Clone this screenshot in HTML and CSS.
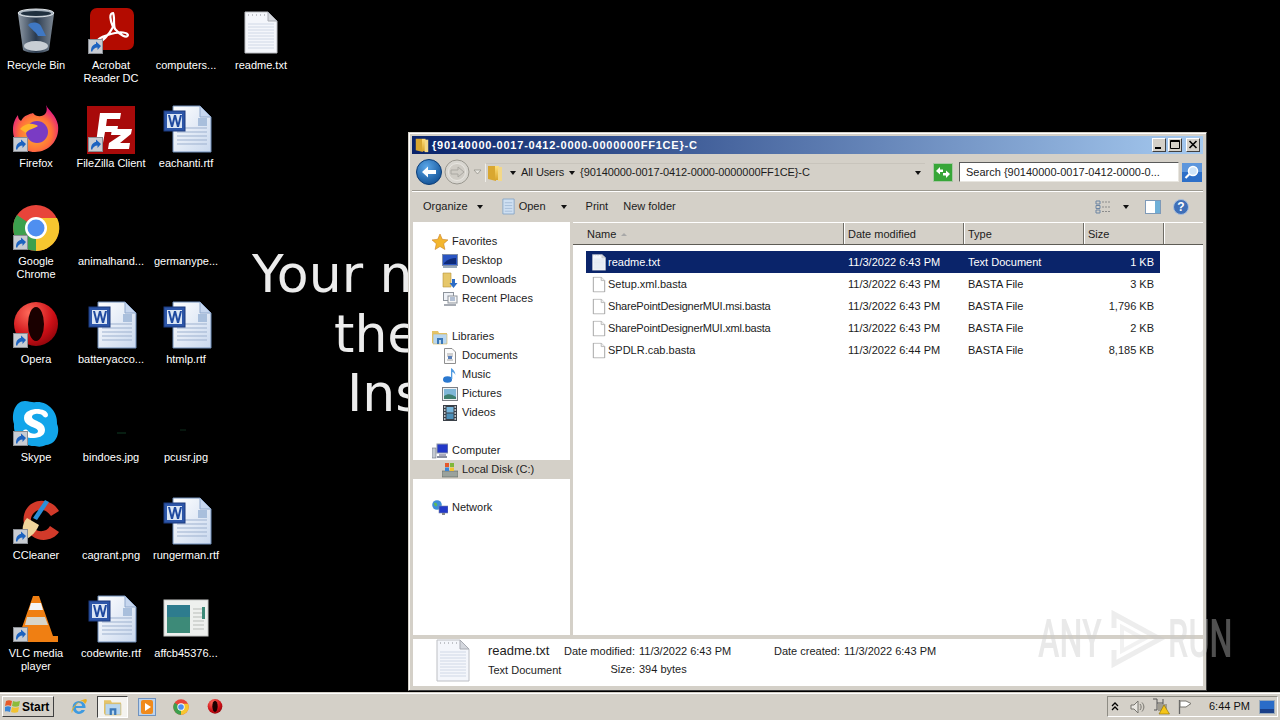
FILE: index.html
```html
<!DOCTYPE html>
<html lang="en">
<head>
<meta charset="utf-8">
<title>Desktop</title>
<link rel="stylesheet" href="styles.css">
</head>
<body>
<svg class="defs" width="0" height="0" aria-hidden="true">
  <defs>
    <linearGradient id="gDoc" x1="0" y1="0" x2="1" y2="1"><stop offset="0" stop-color="#fff"/><stop offset="1" stop-color="#c9d8ee"/></linearGradient>
    <linearGradient id="gFold" x1="0" y1="0" x2="0" y2="1"><stop offset="0" stop-color="#ffdf7a"/><stop offset="1" stop-color="#d9a52c"/></linearGradient>
    <linearGradient id="gBin" x1="0" y1="0" x2="1" y2="0"><stop offset="0" stop-color="#8f9aa6"/><stop offset=".5" stop-color="#2a3a4e"/><stop offset="1" stop-color="#7d8894"/></linearGradient>
    <radialGradient id="gBack" cx=".4" cy=".3" r=".8"><stop offset="0" stop-color="#5aa6e8"/><stop offset="1" stop-color="#0c4a8e"/></radialGradient>
    <radialGradient id="gFox" cx=".5" cy=".6" r=".6"><stop offset="0" stop-color="#ffbd2e"/><stop offset=".6" stop-color="#ff7139"/><stop offset="1" stop-color="#e31587"/></radialGradient>
    <radialGradient id="gOp" cx=".35" cy=".25" r=".9"><stop offset="0" stop-color="#ff6a5a"/><stop offset=".6" stop-color="#cc0f16"/><stop offset="1" stop-color="#7c0208"/></radialGradient>

    <symbol id="word" viewBox="0 0 48 48" overflow="visible">
      <path d="M11 0H38L49 11V46H11Z" fill="url(#gDoc)" stroke="#6f8db8"/>
      <path d="M38 0V11H49Z" fill="#c6d6ee" stroke="#8fa8cc"/>
      <path d="M15 22H45M15 26H45M15 30H45M15 34H45M15 38H45" stroke="#9db1cf"/>
      <rect x="36" y="12" width="9" height="8" fill="#a9bfdc"/>
      <rect x="2" y="5" width="21" height="20" fill="#2d56a8" stroke="#1c3a7f"/>
      <rect x="5" y="8" width="15" height="14" fill="#dbe6f5"/>
      <path d="M6 9L9 21H11L13 13L15 21H17L20 9H18L16 17L14 9H12L10 17L8 9Z" fill="#1f4aa0"/>
    </symbol>

    <symbol id="txt" viewBox="0 0 34 44">
      <path d="M1 1H24L33 10V42H1Z" fill="#f4f6fb" stroke="#bdbfc4"/>
      <path d="M24 1V10H33Z" fill="#d4d7dd" stroke="#a8abb2"/>
      <path d="M4 13H30M4 16H30M4 19H30M4 22H30M4 25H30M4 28H30M4 31H30M4 34H30M4 37H30" stroke="#d0d8e6"/>
      <path d="M4 4H5M8 4H9M12 4H13M16 4H17M20 4H21" stroke="#8d9096"/>
    </symbol>

    <symbol id="blank16" viewBox="0 0 16 18">
      <path d="M1.500 .5H10.500L14.500 4.500V17.500H1.500Z" fill="#fff" stroke="#9a9a9a"/>
      <path d="M10.500 .5V4.500H14.500" fill="#eee" stroke="#b5b5b5"/>
    </symbol>

    <symbol id="folder16" viewBox="0 0 16 18">
      <path d="M1 2H8L9 4V17L1 15Z" fill="#d9a730"/>
      <path d="M8 2H12V16H8Z" fill="url(#gFold)"/>
      <path d="M11 3H15V17H11Z" fill="#f3d888"/>
    </symbol>

    <symbol id="shortcut" viewBox="0 0 15 15">
      <rect x=".5" y=".5" width="14" height="14" fill="#c8ccd2" stroke="#8a8e94"/>
      <path d="M3 12C3 7 6 5 8 5V2.500L13 7L9.500 11V8.500C7 8.500 5 10 4 13Z" fill="#1c63c0"/>
    </symbol>

    <symbol id="star" viewBox="0 0 16 16"><path d="M8 0L10.300 5.300L16 5.900L11.700 9.700L12.900 15.500L8 12.500L3.100 15.500L4.300 9.700L0 5.900L5.700 5.300Z" fill="#f3b62e" stroke="#c9812a" stroke-width=".6"/></symbol>
    <symbol id="desk" viewBox="0 0 16 16"><rect x=".5" y="1.500" width="15" height="11" fill="#2a55c2" stroke="#7e8da8"/><path d="M2 10C6 6 10 5 14 5V11H2Z" fill="#0e2a78"/><rect x="1" y="13" width="14" height="2" fill="#9ab"/></symbol>
    <symbol id="down" viewBox="0 0 16 16"><path d="M1 1H9V15H1Z" fill="#e6c76a" stroke="#b5943c" stroke-width=".6"/><path d="M10 7H13V11H15.500L11.500 16L7.500 11H10Z" fill="#2c6cc6"/></symbol>
    <symbol id="recent" viewBox="0 0 16 16"><rect x="1.500" y="1.500" width="10" height="8" fill="#eef1f6" stroke="#8d939b"/><rect x="6" y="5" width="9" height="7" fill="#f7f7f7" stroke="#8d939b"/><path d="M8 7H13M8 9H13" stroke="#6b86b0"/><rect x="2" y="13" width="12" height="2" fill="#a6abb3"/></symbol>
    <symbol id="lib" viewBox="0 0 16 16"><path d="M0 2H6L7 4H15V14H0Z" fill="#e5c468"/><path d="M1 5H15V15H1Z" fill="#b8d6ee" stroke="#d6b659" stroke-width=".6"/><path d="M5 15V9H11V15H9V11H7V15Z" fill="#3b78b8"/></symbol>
    <symbol id="docs" viewBox="0 0 16 16"><path d="M2.500 .5H10L13.500 4V15.500H2.500Z" fill="#fbfbfb" stroke="#8f8f8f"/><path d="M5 6H11M5 8H11M5 12H11" stroke="#a3a3a3"/><rect x="6" y="8" width="4" height="3" fill="#5a7fb8"/></symbol>
    <symbol id="music" viewBox="0 0 16 16"><ellipse cx="5.500" cy="12.500" rx="4.500" ry="3.300" fill="#2a78cf"/><path d="M9 12V1C11 2 13 4 13.500 8C12.500 6 11 5 10.300 5V12Z" fill="#4f9ae0"/></symbol>
    <symbol id="pics" viewBox="0 0 16 16"><rect x=".5" y="1.500" width="15" height="13" fill="#eef1f4" stroke="#7b7f85"/><rect x="2" y="3" width="12" height="10" fill="#7fb7d8"/><path d="M2 10C6 7 10 8 14 11V13H2Z" fill="#3e7f6f"/></symbol>
    <symbol id="vid" viewBox="0 0 16 16"><rect x="1" y="0" width="14" height="16" fill="#3a4048"/><rect x="4.500" y="2" width="7" height="5.500" fill="#75b6dd"/><rect x="4.500" y="8.500" width="7" height="5.500" fill="#4c8fb8"/><path d="M2 2H3.500M2 5H3.500M2 8H3.500M2 11H3.500M2 14H3.500M12.500 2H14M12.500 5H14M12.500 8H14M12.500 11H14M12.500 14H14" stroke="#dfe6ec" stroke-width="1.400"/></symbol>
    <symbol id="comp" viewBox="0 0 16 16"><rect x="5" y="1" width="11" height="9" fill="#2238c8" stroke="#8b94a8"/><rect x="7" y="11" width="7" height="2" fill="#aab"/><rect x="0" y="5" width="4" height="10" fill="#c5cad2" stroke="#6c7280" stroke-width=".6"/><rect x="5" y="13" width="10" height="2" fill="#8a90a0"/></symbol>
    <symbol id="disk" viewBox="0 0 16 16"><rect x="0" y="9" width="16" height="6" fill="#9aa29c" stroke="#5f6660" stroke-width=".6"/><rect x="3" y="1" width="4" height="4" fill="#e5582a"/><rect x="8" y="1" width="4" height="4" fill="#7fb73a"/><rect x="3" y="5.500" width="4" height="3.500" fill="#3a86d8"/><rect x="8" y="5.500" width="4" height="3.500" fill="#f2c230"/></symbol>
    <symbol id="net" viewBox="0 0 16 16"><circle cx="5" cy="5" r="4.800" fill="#3f8fd8"/><path d="M2 3C4 2 6 4 5 6C3 7 2 5 2 3Z" fill="#5dbb5a"/><rect x="7" y="6" width="9" height="7" fill="#2238c8" stroke="#7d86a0" stroke-width=".6"/><rect x="10" y="13" width="3" height="2" fill="#888"/></symbol>
    <symbol id="ie" viewBox="0 0 18 18"><path d="M9 3A6.500 6.500 0 1 0 15 12H11.500A3 3 0 0 1 6 10H15.500C16 6 13 3 9 3ZM6 8A3 3 0 0 1 12 8Z" fill="#3e9ae0"/><path d="M2 15C0 11 8 2 16 1C18 2 16 5 15 6C14 4 13 3 11 3C7 5 3 10 2 15Z" fill="#e8b024"/></symbol>
    <symbol id="wmp" viewBox="0 0 18 18"><rect x=".5" y=".5" width="17" height="17" fill="#bcd4ee" stroke="#6f93c0"/><rect x="3" y="2" width="12" height="14" rx="2" fill="#f08a1c"/><path d="M7 5L13 9L7 13Z" fill="#fff"/></symbol>
    <symbol id="chrome" viewBox="0 0 48 48">
      <circle cx="24" cy="24" r="23" fill="#e8443a"/>
      <path d="M24 24L4 35A23 23 0 0 1 5 11Z" fill="#3ca04e"/>
      <path d="M24 24L24 47A23 23 0 0 1 4 35Z" fill="#3ca04e"/>
      <path d="M24 14H45A23 23 0 0 1 24 47Z" fill="#f7c62f"/>
      <circle cx="24" cy="24" r="11" fill="#fff"/><circle cx="24" cy="24" r="8.500" fill="#4f8ff0"/>
    </symbol>
    <symbol id="opera" viewBox="0 0 48 48">
      <circle cx="24" cy="22" r="22" fill="url(#gOp)"/>
      <ellipse cx="24" cy="22" rx="8" ry="17" fill="#1a0000"/>
    </symbol>
  </defs>
</svg>

<main class="desktop">
  <div class="wall">
    <p class="wall-line wall-a">Your n</p>
    <p class="wall-line wall-b">the</p>
    <p class="wall-line wall-c">Ins</p>
  </div>

  <section class="icons">
    <div class="ico">
      <svg class="pic" viewBox="0 0 48 48"><path d="M6 6L11 42C16 46 32 46 37 42L42 6Z" fill="url(#gBin)"/><ellipse cx="24" cy="5" rx="18" ry="4" fill="#a9b4bf" stroke="#dfe4e8"/><ellipse cx="24" cy="5.500" rx="15" ry="2.400" fill="#20303f"/><path d="M16 17C20 13 28 14 30 20L34 28L26 28C24 24 20 22 16 17Z" fill="#3f78c4"/><ellipse cx="24" cy="38" rx="12" ry="5" fill="#c8ced4"/></svg>
      <span class="lbl">Recycle Bin</span>
    </div>
    <div class="ico">
      <svg class="pic" viewBox="0 1 48 48"><path d="M34 0C37 6 44 10 46 20C48 36 36 47 23 47C10 47 1 37 1 25C1 18 3 14 6 10C6 14 8 15 9 16C12 10 18 9 21 8C25 14 38 12 34 0Z" fill="url(#gFox)"/><circle cx="25" cy="27" r="11" fill="#7a3bc4"/><path d="M8 24C14 17 22 18 26 21C22 24 16 24 14 28Z" fill="#ffb52a"/></svg>
      <svg class="scut" viewBox="0 0 15 15"><use href="#shortcut"/></svg>
      <span class="lbl">Firefox</span>
    </div>
    <div class="ico">
      <svg class="pic" viewBox="0 0 48 48"><use href="#chrome"/></svg>
      <svg class="scut" viewBox="0 0 15 15"><use href="#shortcut"/></svg>
      <span class="lbl">Google<br>Chrome</span>
    </div>
    <div class="ico">
      <svg class="pic" viewBox="0 0 48 48"><use href="#opera"/></svg>
      <svg class="scut" viewBox="0 0 15 15"><use href="#shortcut"/></svg>
      <span class="lbl">Opera</span>
    </div>
    <div class="ico">
      <svg class="pic" viewBox="0 0 48 48"><path d="M13 1C18 1 20 3 24 2C36 1 46 12 45 24C48 30 46 44 34 45C28 48 24 46 22 46C10 46 1 36 2 24C-1 14 3 1 13 1Z" fill="#12a5ea"/><path d="M33 30C33 37 25 38 20 38C16 38 11 36 11 32C11 29 15 29 16 31C18 34 26 35 26 31C26 27 12 27 12 18C12 11 20 9 25 9C30 9 36 11 36 15C36 18 32 18 31 16C29 13 20 13 20 17C20 21 33 21 33 30Z" fill="#fff"/></svg>
      <svg class="scut" viewBox="0 0 15 15"><use href="#shortcut"/></svg>
      <span class="lbl">Skype</span>
    </div>
    <div class="ico">
      <svg class="pic" viewBox="0 0 48 48"><path d="M47 13C42 4 30 0 21 5C9 11 8 30 20 38C29 45 42 42 47 34L38 28C35 34 26 35 22 30C16 24 19 14 27 12C32 11 36 14 39 18Z" fill="#d23a2a"/><path d="M33 2L37 4L25 22L21 20Z" fill="#2a8fd8"/><path d="M15 20L27 27C24 34 20 38 13 42C10 36 9 26 15 20Z" fill="#efd49a"/></svg>
      <svg class="scut" viewBox="0 0 15 15"><use href="#shortcut"/></svg>
      <span class="lbl">CCleaner</span>
    </div>
    <div class="ico">
      <svg class="pic" viewBox="0 0 48 48"><path d="M21 0H27L41 40H46V46H8V40H7Z" fill="#f07f12"/><path d="M19 7H29L31 14H17Z" fill="#f4f4f4"/><path d="M15 21H33L36 29H13Z" fill="#d8d4c8"/></svg>
      <svg class="scut" viewBox="0 0 15 15"><use href="#shortcut"/></svg>
      <span class="lbl">VLC media<br>player</span>
    </div>

    <div class="ico">
      <svg class="pic" viewBox="0 0 48 48"><rect x="3" y="0" width="44" height="42" rx="7" fill="#b30b00"/><path d="M26 5C22 5 23 12 26 19C22 27 15 34 10 35C9 30 20 27 28 25C33 24 40 24 41 27C40 31 33 27 28 21C26 16 28 9 26 5Z" fill="none" stroke="#fff" stroke-width="2.200"/></svg>
      <svg class="scut" viewBox="0 0 15 15"><use href="#shortcut"/></svg>
      <span class="lbl">Acrobat<br>Reader DC</span>
    </div>
    <div class="ico">
      <svg class="pic" viewBox="0 1 48 48"><rect x="0" y="1" width="48" height="48" fill="#a80a0a"/><path d="M13 8H34L33 14H20L19 21H31L30 27H18L16 38H9Z" fill="#fff"/><path d="M25 24H45L44 29L33 38H43L42 44H21L22 38L34 30H24Z" fill="#fff"/></svg>
      <svg class="scut" viewBox="0 0 15 15"><use href="#shortcut"/></svg>
      <span class="lbl">FileZilla Client</span>
    </div>
    <div class="ico"><span class="pic"></span><span class="lbl">animalhand...</span></div>
    <div class="ico"><svg class="pic" viewBox="0 0 48 48"><use href="#word"/></svg><span class="lbl">batteryacco...</span></div>
    <div class="ico"><svg class="pic" viewBox="0 0 48 48"><path d="M30 33H39" stroke="#0e3a22" stroke-width="1"/></svg><span class="lbl">bindoes.jpg</span></div>
    <div class="ico"><span class="pic"></span><span class="lbl">cagrant.png</span></div>
    <div class="ico"><svg class="pic" viewBox="0 0 48 48"><use href="#word"/></svg><span class="lbl">codewrite.rtf</span></div>

    <div class="ico"><span class="pic"></span><span class="lbl">computers...</span></div>
    <div class="ico"><svg class="pic" viewBox="0 0 48 48"><use href="#word"/></svg><span class="lbl">eachanti.rtf</span></div>
    <div class="ico"><span class="pic"></span><span class="lbl">germanype...</span></div>
    <div class="ico"><svg class="pic" viewBox="0 0 48 48"><use href="#word"/></svg><span class="lbl">htmlp.rtf</span></div>
    <div class="ico"><svg class="pic" viewBox="0 0 48 48"><path d="M18 30H24" stroke="#0e2c1c" stroke-width="1"/></svg><span class="lbl">pcusr.jpg</span></div>
    <div class="ico"><svg class="pic" viewBox="0 0 48 48"><use href="#word"/></svg><span class="lbl">rungerman.rtf</span></div>
    <div class="ico">
      <svg class="pic" viewBox="0 0 48 48"><rect x="2" y="4" width="44" height="36" fill="#eef0ee" stroke="#c8cac8"/><rect x="5" y="9" width="23" height="28" fill="#3d8a78"/><rect x="5" y="9" width="23" height="12" fill="#2e7c8e"/><path d="M31 13H42M31 17H42M31 21H42M31 25H42M31 29H42M31 33H42" stroke="#b9bdb9"/><rect x="40" y="11" width="3" height="12" fill="#3d8a78"/></svg>
      <span class="lbl">affcb45376...</span>
    </div>

    <div class="ico">
      <svg class="pic" viewBox="0 0 48 48"><use href="#txt" x="7" y="3" width="34" height="44"/></svg>
      <span class="lbl">readme.txt</span>
    </div>
  </section>

  <section class="win">
    <header class="title">
      <svg class="t-ico" viewBox="0 0 16 18"><use href="#folder16"/></svg>
      <h1 class="t-text">{90140000-0017-0412-0000-0000000FF1CE}-C</h1>
      <div class="t-btns">
        <span class="cap"><svg viewBox="0 0 12 12"><rect x="2" y="8" width="6" height="2" fill="#000"/></svg></span>
        <span class="cap"><svg viewBox="0 0 12 12"><path d="M1.500 1.500H10.500V9.500H1.500ZM1.500 2.500H10.500" fill="none" stroke="#000"/></svg></span>
        <span class="cap cap-x"><svg viewBox="0 0 12 12"><path d="M2.500 2L9.500 9M9.500 2L2.500 9" stroke="#000" stroke-width="1.600"/></svg></span>
      </div>
    </header>

    <div class="addr">
      <div class="nav-btns">
        <svg class="round" width="26" height="26" viewBox="0 0 26 26"><circle cx="13" cy="13" r="12.500" fill="url(#gBack)" stroke="#0b3d78"/><path d="M6 13L12 7.500V11H20V15H12V18.500Z" fill="#fff"/></svg>
        <svg class="round" width="26" height="26" viewBox="0 0 26 26"><circle cx="13" cy="13" r="12" fill="#d8d6d0" stroke="#99978f"/><circle cx="13" cy="13" r="8.500" fill="#cfccc5" stroke="#e8e6e1"/><path d="M20 13L14 8V11H7V15H14V18Z" fill="none" stroke="#aaa8a2"/></svg>
        <svg class="tiny" width="9" height="6" viewBox="0 0 9 6"><path d="M1 1L4.500 5L8 1Z" fill="#e8e6e0" stroke="#8e8c84" stroke-width=".7"/></svg>
      </div>
      <div class="path">
        <svg class="p-ico" viewBox="0 0 16 18"><use href="#folder16"/></svg>
        <span class="arrow a-first"></span>
        <span>All Users</span>
        <span class="arrow"></span>
        <span>{90140000-0017-0412-0000-0000000FF1CE}-C</span>
        <span class="arrow a-end"></span>
      </div>
      <svg class="go" width="20" height="19" viewBox="0 0 20 19"><rect x=".5" y=".5" width="19" height="18" fill="#37a638" stroke="#a8c8a4"/><path d="M3 8L7 4V6.500H10V9H7V11.500ZM17 11L13 15V12.500H10V10H13V7.500Z" fill="#fff"/></svg>
      <div class="search">Search {90140000-0017-0412-0000-0...</div>
      <svg class="s-btn" width="20" height="19" viewBox="0 0 20 19"><rect width="20" height="19" fill="#2d6fc8"/><rect width="20" height="9" fill="#5d96dc"/><circle cx="11" cy="8" r="4.500" fill="#cfe4f8" stroke="#fff" stroke-width="1.500"/><path d="M7.500 11L3.500 15" stroke="#fff" stroke-width="2.200"/></svg>
    </div>

    <div class="tools">
      <span class="tool">Organize</span><span class="arrow t-a1"></span>
      <svg class="open-ico" viewBox="0 0 16 18"><path d="M2 1H14V17H2Z" fill="#cfe0f2" stroke="#8aa8c8"/><path d="M4 5H12M4 8H12M4 11H12M4 14H12" stroke="#a4bcd8"/></svg>
      <span class="tool">Open</span><span class="arrow t-a2"></span>
      <span class="tool t-print">Print</span>
      <span class="tool t-new">New folder</span>
      <div class="t-right">
        <svg class="v-ico" width="16" height="16" viewBox="0 0 16 16"><path d="M1 2H5V5H1ZM1 6.500H5V9.500H1ZM1 11H5V14H1Z" fill="none" stroke="#6d85a3"/><path d="M7 3H15M7 8H15M7 12.500H15" stroke="#8c8c8c" stroke-dasharray="2 1"/></svg>
        <span class="arrow t-a3"></span>
        <svg class="v-pane" width="16" height="16" viewBox="0 0 16 16"><rect x=".5" y="1.500" width="15" height="13" fill="#fff" stroke="#7e9ab8"/><rect x="10" y="2" width="5" height="12" fill="#6fb0d8"/></svg>
        <svg class="v-help" width="16" height="16" viewBox="0 0 16 16"><circle cx="8" cy="8" r="7.500" fill="#3f6fb8" stroke="#a8bedc"/><text x="8" y="12" class="help-q">?</text></svg>
      </div>
    </div>

    <div class="body">
      <nav class="nav">
        <ul class="tree">
          <li class="n0 top"><svg viewBox="0 0 16 16"><use href="#star"/></svg>Favorites</li>
          <li class="n1"><svg viewBox="0 0 16 16"><use href="#desk"/></svg>Desktop</li>
          <li class="n1"><svg viewBox="0 0 16 16"><use href="#down"/></svg>Downloads</li>
          <li class="n1"><svg viewBox="0 0 16 16"><use href="#recent"/></svg>Recent Places</li>
        </ul>
        <ul class="tree">
          <li class="n0"><svg viewBox="0 0 16 16"><use href="#lib"/></svg>Libraries</li>
          <li class="n1"><svg viewBox="0 0 16 16"><use href="#docs"/></svg>Documents</li>
          <li class="n1"><svg viewBox="0 0 16 16"><use href="#music"/></svg>Music</li>
          <li class="n1"><svg viewBox="0 0 16 16"><use href="#pics"/></svg>Pictures</li>
          <li class="n1"><svg viewBox="0 0 16 16"><use href="#vid"/></svg>Videos</li>
        </ul>
        <ul class="tree">
          <li class="n0"><svg viewBox="0 0 16 16"><use href="#comp"/></svg>Computer</li>
          <li class="n1 cur"><svg viewBox="0 0 16 16"><use href="#disk"/></svg>Local Disk (C:)</li>
        </ul>
        <ul class="tree">
          <li class="n0"><svg viewBox="0 0 16 16"><use href="#net"/></svg>Network</li>
        </ul>
      </nav>

      <div class="list">
        <div class="cols">
          <span class="col c-name">Name <i class="sort"></i></span>
          <span class="col c-date">Date modified</span>
          <span class="col c-type">Type</span>
          <span class="col c-size">Size</span>
          <span class="col c-rest"></span>
        </div>
        <div class="rows">
          <div class="row sel"><span class="f f-name"><svg viewBox="0 0 34 44" preserveAspectRatio="none"><use href="#txt"/></svg>readme.txt</span><span class="f f-date">11/3/2022 6:43 PM</span><span class="f f-type">Text Document</span><span class="f f-size">1 KB</span></div>
          <div class="row"><span class="f f-name"><svg viewBox="0 0 16 18"><use href="#blank16"/></svg>Setup.xml.basta</span><span class="f f-date">11/3/2022 6:43 PM</span><span class="f f-type">BASTA File</span><span class="f f-size">3 KB</span></div>
          <div class="row"><span class="f f-name tight"><svg viewBox="0 0 16 18"><use href="#blank16"/></svg>SharePointDesignerMUI.msi.basta</span><span class="f f-date">11/3/2022 6:43 PM</span><span class="f f-type">BASTA File</span><span class="f f-size">1,796 KB</span></div>
          <div class="row"><span class="f f-name tight"><svg viewBox="0 0 16 18"><use href="#blank16"/></svg>SharePointDesignerMUI.xml.basta</span><span class="f f-date">11/3/2022 6:43 PM</span><span class="f f-type">BASTA File</span><span class="f f-size">2 KB</span></div>
          <div class="row"><span class="f f-name"><svg viewBox="0 0 16 18"><use href="#blank16"/></svg>SPDLR.cab.basta</span><span class="f f-date">11/3/2022 6:44 PM</span><span class="f f-type">BASTA File</span><span class="f f-size">8,185 KB</span></div>
        </div>
      </div>
    </div>

    <footer class="details">
      <svg class="d-ico" viewBox="0 0 34 44"><use href="#txt"/></svg>
      <div class="d-a"><div class="d-name">readme.txt</div><div>Text Document</div></div>
      <div class="d-b">
        <div class="d-kv"><span class="k">Date modified:</span><span>11/3/2022 6:43 PM</span></div>
        <div class="d-kv"><span class="k">Size:</span><span>394 bytes</span></div>
      </div>
      <div class="d-c">
        <div class="d-kv"><span class="k">Date created:</span><span>11/3/2022 6:43 PM</span></div>
      </div>
    </footer>
  </section>

  <div class="mark">
    <span class="m-t m-any">ANY</span>
    <svg class="m-logo" width="60" height="58" viewBox="0 0 60 58"><path d="M8 18V4L54 29L8 54V40" fill="none" stroke="#c8c8c8" stroke-opacity=".33" stroke-width="5"/><path d="M16 17L38 29L16 41Z" fill="none" stroke="#c8c8c8" stroke-opacity=".25" stroke-width="4"/></svg>
    <span class="m-t m-run">RUN</span>
  </div>
</main>

<footer class="taskbar">
  <button class="start">
    <svg width="16" height="15" viewBox="0 0 16 15"><path d="M1 2C3 1 5 1 7 2L6 7C4 6 2 6 0 7Z" fill="#e85a2a"/><path d="M8 2C10 3 12 3 15 2L14 7C12 8 9 8 7 7Z" fill="#8cbb3c"/><path d="M0 8C2 7 4 7 6 8L5 13C3 12 1 12 -1 13Z" fill="#3a86d8"/><path d="M7 8C9 9 11 9 14 8L13 13C11 14 8 14 6 13Z" fill="#f2c230"/></svg>
    <span>Start</span>
  </button>
  <div class="quick">
    <span class="q"><svg width="18" height="18" viewBox="0 0 18 18"><use href="#ie"/></svg></span>
    <span class="q q-on"><svg width="18" height="18" viewBox="0 0 16 16"><use href="#lib"/></svg></span>
    <span class="q"><svg width="18" height="18" viewBox="0 0 18 18"><use href="#wmp"/></svg></span>
    <span class="q"><svg width="16" height="16" viewBox="0 0 48 48"><use href="#chrome"/></svg></span>
    <span class="q"><svg width="16" height="16" viewBox="0 0 48 48"><use href="#opera"/></svg></span>
  </div>
  <div class="tray">
    <svg class="tr tr-up" width="8" height="9" viewBox="0 0 8 9"><path d="M1 4L4 1L7 4M1 8L4 5L7 8" fill="none" stroke="#000" stroke-width="1.300"/></svg>
    <svg class="tr" width="16" height="16" viewBox="0 0 16 16"><path d="M2 6H5L9 2V14L5 10H2Z" fill="#e9e7e2" stroke="#77756f"/><path d="M11 5C12.500 7 12.500 9 11 11M13 3.500C15.500 6.500 15.500 9.500 13 12.500" fill="none" stroke="#77756f"/></svg>
    <svg class="tr" width="18" height="17" viewBox="0 0 18 17"><path d="M1 1H5V5H11V1M5 5V12H2M11 5V12" fill="none" stroke="#555"/><rect x="6" y="6" width="9" height="7" fill="#a09c90"/><path d="M12 7L17.500 16H7Z" fill="#f5c518" stroke="#8a6d00" stroke-width=".6"/></svg>
    <svg class="tr" width="16" height="16" viewBox="0 0 16 16"><path d="M2.500 1V15" stroke="#666" stroke-width="1.300"/><path d="M3 2H9L14 4.500L9 8H3Z" fill="#fff" stroke="#77756f"/></svg>
    <span class="clock">6:44 PM</span>
    <svg class="tr-desk" width="16" height="14" viewBox="0 0 16 14"><rect x=".5" y=".5" width="15" height="13" fill="#2a6cc8" stroke="#9ab"/><path d="M1 9H15V13H1Z" fill="#1a3f88"/></svg>
  </div>
</footer>
</body>
</html>
```
FILE: styles.css
```css
* { box-sizing: border-box; }
html, body { margin: 0; padding: 0; }
body {
  width: 1280px; height: 720px; overflow: hidden; position: relative;
  background: #000; color: #000;
  font: 11px/13px "Liberation Sans", Arial, sans-serif;
  display: flex; flex-direction: column;
}
.defs { position: absolute; }
h1, p, ul { margin: 0; padding: 0; }
ul { list-style: none; }

/* desktop */
.desktop { position: relative; height: 692px; overflow: hidden; background: #000; }
.wall { position: absolute; left: 0; top: 245px; color: #ececec; font: 52px/59.500px "DejaVu Sans", sans-serif; white-space: nowrap; }
.wall-a { padding-left: 252px; }
.wall-b { padding-left: 334px; }
.wall-c { padding-left: 347px; }

.icons {
  position: relative;
  display: grid; grid-auto-flow: column;
  grid-template-rows: repeat(7, 98px);
  grid-template-columns: repeat(4, 72px);
  column-gap: 3px;
}
.ico { position: relative; display: flex; flex-direction: column; align-items: center; padding-top: 8px; color: #fff; }
.pic { display: block; width: 48px; height: 48px; flex: none; overflow: visible; }
.scut { position: absolute; width: 15px; height: 15px; left: 13px; top: 39px; }
.lbl { margin-top: 3px; text-align: center; white-space: nowrap; }

/* window */
.win {
  position: absolute; left: 408px; top: 132px; width: 799px; height: 559px;
  display: flex; flex-direction: column;
  background: #d4d0c8; padding: 3px 3px 4px 3px;
  border: 1px solid; border-color: #d4d0c8 #404040 #404040 #d4d0c8;
  box-shadow: inset 1px 1px 0 #fff;
}
.title {
  flex: none; height: 18px; display: flex; align-items: center; padding: 0 3px 0 2px;
  background: linear-gradient(90deg, #0a246a, #a6caf0);
}
.t-ico { width: 16px; height: 16px; }
.t-text { font-size: 11px; font-weight: 700; color: #fff; margin-left: 2px; letter-spacing: .77px; }
.t-btns { margin-left: auto; display: flex; gap: 2px; }
.cap {
  width: 14px; height: 14px; background: #d4d0c8; display: block;
  border: 1px solid; border-color: #fff #404040 #404040 #fff;
}
.cap svg { display: block; width: 12px; height: 12px; }
.cap-x { margin-left: 2px; }

.addr {
  flex: none; height: 37px; display: flex; align-items: center; padding: 0 2px 0 4px;
  border-bottom: 1px solid #9d9a91; box-shadow: 0 1px 0 #fff;
}
.nav-btns { display: flex; align-items: center; gap: 2px; width: 69px; flex: none; }
.round { flex: none; }
.tiny { margin-left: 1px; flex: none; }
.path {
  flex: none; width: 440px; height: 19px; display: flex; align-items: center; gap: 5px; padding: 0 4px 0 1px;
  border-left: 1px solid #efeee9; border-top: 1px solid #c8c4bc; color: #1c1c1c; letter-spacing: -.1px;
}
.p-ico { width: 16px; height: 18px; flex: none; }
.arrow { display: inline-block; width: 0; height: 0; border: 3.500px solid transparent; border-top: 4px solid #111; border-bottom: 0; flex: none; }
.a-first { margin-left: 2px; }
.a-end { margin-left: auto; margin-right: 0; }
.go { margin-left: 8px; flex: none; }
.search {
  flex: none; width: 220px; height: 20px; margin-left: 6px; padding: 3px 0 0 6px; background: #fff; color: #222;
  border: 1px solid; border-color: #5a5a5a #e8e6e0 #e8e6e0 #5a5a5a;
}
.s-btn { margin-left: 3px; flex: none; }

.tools { flex: none; height: 31px; display: flex; align-items: center; padding: 0 14px 0 11px; color: #1c1c1c; }
.t-a1 { margin-left: 9px; margin-right: 18px; }
.open-ico { width: 15px; height: 17px; margin-right: 3px; }
.t-a2 { margin-left: 15px; }
.t-print { margin-left: 19px; }
.t-new { margin-left: 15px; }
.t-right { margin-left: auto; display: flex; align-items: center; }
.t-a3 { margin-left: 12px; margin-right: 16px; }
.v-help { margin-left: 12px; }
.help-q { font: bold 12px "Liberation Sans", sans-serif; fill: #fff; text-anchor: middle; }

.body { flex: 1; min-height: 0; display: flex; padding-left: 1px; }
.nav { flex: none; width: 157px; background: #fff; padding-top: 10px; margin-right: 3px; color: #1c1c1c; }
.tree { margin-bottom: 19px; }
.tree li { height: 19px; display: flex; align-items: center; }
.tree svg { width: 16px; height: 16px; flex: none; margin-right: 4px; }
.n0 { padding-left: 19px; }
.n1 { padding-left: 29px; }
.cur { background: #d4d0c8; }

.list { flex: 1; min-width: 0; background: #fff; display: flex; flex-direction: column; color: #1c1c1c; }
.cols { flex: none; height: 23px; display: flex; background: #d4d0c8; border-top: 1px solid #fff; border-bottom: 1px solid #5e5c55; }
.col { flex: none; display: flex; align-items: center; padding: 1px 0 0 4px; border-right: 1px solid #6f6d66; box-shadow: 1px 0 0 #fff; }
.c-name { width: 271px; padding-left: 14px; }
.c-date { width: 120px; }
.c-type { width: 120px; }
.c-size { width: 80px; }
.c-rest { flex: 1; border-right: 0; box-shadow: none; }
.sort { width: 0; height: 0; margin-left: 5px; border: 3px solid transparent; border-bottom: 3px solid #a8a8a8; border-top: 0; }
.rows { padding: 6px 0 0 13px; }
.row { width: 574px; height: 22px; display: flex; align-items: center; }
.sel { background: #0a246a; color: #fff; }
.f { flex: none; display: flex; align-items: center; white-space: nowrap; }
.f-name { width: 262px; padding-left: 6px; }
.f-name svg { width: 14px; height: 17px; margin-right: 2px; flex: none; }
.tight { letter-spacing: -.2px; }
.f-date { width: 120px; }
.f-type { width: 100px; }
.f-size { width: 86px; justify-content: flex-end; }

.details {
  flex: none; height: 51px; display: flex; background: #fff; color: #1c1c1c; margin-left: 1px;
  border-top: 4px solid #d4d0c8; position: relative;
}
.d-ico { width: 34px; height: 44px; margin: 0 0 0 23px; flex: none; }
.d-a { margin-left: 18px; width: 76px; padding-top: 5px; }
.d-name { font-size: 13px; height: 18px; margin-bottom: 2px; }
.d-b { width: 205px; padding-top: 5px; }
.d-c { padding-top: 5px; }
.d-kv { display: flex; height: 18px; align-items: flex-start; padding-top: 1px; }
.k { width: 71px; text-align: right; margin-right: 4px; white-space: nowrap; }

/* watermark */
.mark { position: absolute; left: 1038px; top: 609px; display: flex; align-items: center; height: 60px; color: rgba(200,200,200,.4); pointer-events: none; filter: blur(.4px); }
.m-t { font: 500 54px/60px Roboto, "Liberation Sans", sans-serif; display: block; width: 67px; transform: scaleX(.6); transform-origin: left center; }
.m-logo { flex: none; margin: 0 2px 0 1px; }

/* taskbar */
.taskbar {
  flex: none; height: 28px; background: #d4d0c8; border-top: 1px solid #d4d0c8; box-shadow: inset 0 1px 0 #fff;
  display: flex; align-items: center; padding: 0 2px 0 2px;
}
.start {
  width: 52px; height: 21px; padding: 0 0 0 2px; display: flex; align-items: center; gap: 1px;
  background: #d4d0c8; border: 1px solid; border-color: #fff #404040 #404040 #fff;
  font: 700 12px "Liberation Sans", sans-serif; color: #000;
}
.quick { display: flex; margin-left: 9px; align-items: center; gap: 3px; }
.q { width: 31px; height: 22px; display: flex; align-items: center; justify-content: center; }
.q-on { background: #f4f3ef; border: 1px solid; border-color: #404040 #fff #fff #404040; }
.tray {
  margin-left: auto; width: 171px; height: 21px; display: flex; align-items: center; padding-left: 3px;
  border: 1px solid; border-color: #8e8c84 #fff #fff #8e8c84; color: #111;
}
.tr { flex: none; margin-right: 7px; }
.tr-up { margin-right: 10px; }
.clock { margin-left: 9px; flex: none; white-space: nowrap; }
.tr-desk { margin-left: auto; margin-right: 2px; }
```
